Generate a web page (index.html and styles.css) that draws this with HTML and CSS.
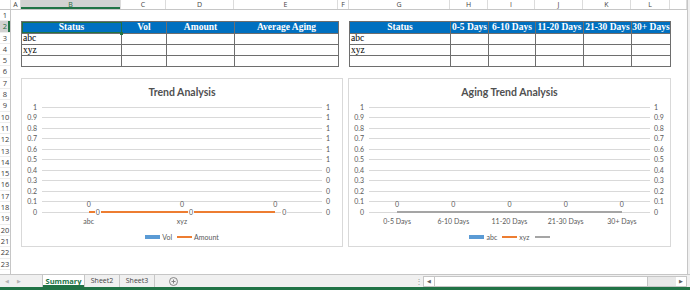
FILE: index.html
```html
<!DOCTYPE html>
<html lang="en">
<head>
    <meta charset="UTF-8">
    <meta name="viewport" content="width=device-width, initial-scale=1.0">
    <title>Summary</title>
    <link rel="stylesheet" href="styles.css">
</head>
<body>
<div class="window">
  <div class="workarea">
    <div class="sheet-area">
      <div class="col-heads">
        <div class="corner"></div>
        <div>A</div><div class="active">B</div><div>C</div><div>D</div><div>E</div><div>F</div>
        <div>G</div><div>H</div><div>I</div><div>J</div><div>K</div><div>L</div><div></div>
      </div>

      <div class="sheet">
        <div class="row-heads">
          <div class="rn">1</div><div class="rn active">2</div><div class="rn">3</div><div class="rn">4</div>
          <div class="rn">5</div><div class="rn">6</div><div class="rn">7</div><div class="rn">8</div>
          <div class="rn">9</div><div class="rn">10</div><div class="rn">11</div><div class="rn">12</div>
          <div class="rn">13</div><div class="rn">14</div><div class="rn">15</div><div class="rn">16</div>
          <div class="rn">17</div><div class="rn">18</div><div class="rn">19</div><div class="rn">20</div>
          <div class="rn">21</div><div class="rn">22</div><div class="rn">23</div>
        </div>

        <div class="cells">
          <table class="data-table table-left">
            <colgroup><col style="width:100px"><col style="width:45px"><col style="width:68px"><col style="width:104px"></colgroup>
            <tr><th class="selected">Status</th><th>Vol</th><th>Amount</th><th>Average Aging</th></tr>
            <tr><td>abc</td><td></td><td></td><td></td></tr>
            <tr><td>xyz</td><td></td><td></td><td></td></tr>
            <tr><td></td><td></td><td></td><td></td></tr>
          </table>

          <table class="data-table table-right">
            <colgroup><col style="width:101px"><col style="width:38px"><col style="width:47px"><col style="width:48px"><col style="width:48px"><col style="width:39px"></colgroup>
            <tr><th>Status</th><th>0-5 Days</th><th>6-10 Days</th><th>11-20 Days</th><th>21-30 Days</th><th>30+ Days</th></tr>
            <tr><td>abc</td><td></td><td></td><td></td><td></td><td></td></tr>
            <tr><td>xyz</td><td></td><td></td><td></td><td></td><td></td></tr>
            <tr><td></td><td></td><td></td><td></td><td></td><td></td></tr>
          </table>

          <!-- Trend Analysis chart -->
          <div class="chart chart-left">
            <div class="chart-title">Trend Analysis</div>
            <div class="plot">
              <div class="tick"><span class="lbl-l">1</span><span class="rule"></span><span class="lbl-r">1</span></div>
              <div class="tick"><span class="lbl-l">0.9</span><span class="rule"></span><span class="lbl-r">1</span></div>
              <div class="tick"><span class="lbl-l">0.8</span><span class="rule"></span><span class="lbl-r">1</span></div>
              <div class="tick"><span class="lbl-l">0.7</span><span class="rule"></span><span class="lbl-r">1</span></div>
              <div class="tick"><span class="lbl-l">0.6</span><span class="rule"></span><span class="lbl-r">1</span></div>
              <div class="tick"><span class="lbl-l">0.5</span><span class="rule"></span><span class="lbl-r">1</span></div>
              <div class="tick"><span class="lbl-l">0.4</span><span class="rule"></span><span class="lbl-r">0</span></div>
              <div class="tick"><span class="lbl-l">0.3</span><span class="rule"></span><span class="lbl-r">0</span></div>
              <div class="tick"><span class="lbl-l">0.2</span><span class="rule"></span><span class="lbl-r">0</span></div>
              <div class="tick"><span class="lbl-l">0.1</span><span class="rule"></span><span class="lbl-r">0</span></div>
              <div class="tick"><span class="lbl-l">0</span><span class="rule"></span><span class="lbl-r">0</span></div>
              <div class="series">
                <div class="series-line orange three"></div>
                <div class="val-labels three"><span>0</span><span>0</span><span>0</span></div>
                <div class="val-labels three on-line"><span><em>0</em></span><span><em>0</em></span><span><em>0</em></span></div>
              </div>
            </div>
            <div class="cats three"><span>abc</span><span>xyz</span><span></span></div>
            <div class="legend">
              <div class="key"><span class="swatch bar"></span>Vol</div>
              <div class="key"><span class="swatch orange"></span>Amount</div>
            </div>
          </div>

          <!-- Aging Trend Analysis chart -->
          <div class="chart chart-right">
            <div class="chart-title">Aging Trend Analysis</div>
            <div class="plot">
              <div class="tick"><span class="lbl-l">1</span><span class="rule"></span><span class="lbl-r">1</span></div>
              <div class="tick"><span class="lbl-l">0.9</span><span class="rule"></span><span class="lbl-r">0.9</span></div>
              <div class="tick"><span class="lbl-l">0.8</span><span class="rule"></span><span class="lbl-r">0.8</span></div>
              <div class="tick"><span class="lbl-l">0.7</span><span class="rule"></span><span class="lbl-r">0.7</span></div>
              <div class="tick"><span class="lbl-l">0.6</span><span class="rule"></span><span class="lbl-r">0.6</span></div>
              <div class="tick"><span class="lbl-l">0.5</span><span class="rule"></span><span class="lbl-r">0.5</span></div>
              <div class="tick"><span class="lbl-l">0.4</span><span class="rule"></span><span class="lbl-r">0.4</span></div>
              <div class="tick"><span class="lbl-l">0.3</span><span class="rule"></span><span class="lbl-r">0.3</span></div>
              <div class="tick"><span class="lbl-l">0.2</span><span class="rule"></span><span class="lbl-r">0.2</span></div>
              <div class="tick"><span class="lbl-l">0.1</span><span class="rule"></span><span class="lbl-r">0.1</span></div>
              <div class="tick"><span class="lbl-l">0</span><span class="rule"></span><span class="lbl-r">0</span></div>
              <div class="series">
                <div class="series-line gray five"></div>
                <div class="val-labels five"><span>0</span><span>0</span><span>0</span><span>0</span><span>0</span></div>
              </div>
            </div>
            <div class="cats five"><span>0-5 Days</span><span>6-10 Days</span><span>11-20 Days</span><span>21-30 Days</span><span>30+ Days</span></div>
            <div class="legend">
              <div class="key"><span class="swatch bar"></span>abc</div>
              <div class="key"><span class="swatch orange"></span>xyz</div>
              <div class="key"><span class="swatch gray"></span></div>
            </div>
          </div>
        </div>
      </div>
    </div>
    <div class="vscroll"></div>
  </div>

  <div class="tabbar">
    <div class="nav"><span>&#9664;</span><span>&#9654;</span></div>
    <div class="tab active">Summary</div>
    <div class="tab">Sheet2</div>
    <div class="tab">Sheet3</div>
    <div class="add-sheet">
      <svg width="9" height="9" viewBox="0 0 9 9"><circle cx="4.5" cy="4.5" r="4" fill="none" stroke="#7a7a7a" stroke-width="0.9"/><path d="M4.5 2.5v4M2.5 4.5h4" stroke="#7a7a7a" stroke-width="0.9"/></svg>
    </div>
    <div class="spacer"></div>
    <div class="splitter">&#8942;</div>
    <div class="hscroll">
      <span class="arrow">&#9664;</span>
      <span class="thumb"></span>
      <span class="track"></span>
      <span class="arrow">&#9654;</span>
    </div>
  </div>
  <div class="statusbar"></div>
</div>
</body>
</html>
```

FILE: styles.css
```css
body {
  margin: 0;
  width: 690px;
  height: 290px;
  overflow: hidden;
  background: #fff;
  font-family: "Open Sans", sans-serif;
}

.window {
  display: flex;
  flex-direction: column;
  height: 290px;
}

.workarea {
  display: flex;
  height: 274px;
}

.sheet-area {
  width: 687px;
  display: flex;
  flex-direction: column;
}

.vscroll {
  flex: 1;
  background: #f0f0f0;
  border-left: 1px solid #c6c6c6;
}

/* column letters */
.col-heads {
  display: grid;
  grid-template-columns: 11px 10px 100px 45px 68px 104px 11px 101px 38px 47px 48px 48px 39px 1fr;
  height: 10px;
  box-sizing: border-box;
  border-bottom: 1px solid #c6c6c6;
}

.col-heads div {
  border-right: 1px solid #dcdcdc;
  text-align: center;
  font-size: 7px;
  line-height: 9px;
  color: #444;
}

.col-heads .active {
  background: #d2d2d2;
  box-shadow: inset 0 -2px #217346;
  color: #1e6b41;
}

.sheet {
  display: flex;
  flex: 1;
  overflow: hidden;
}

/* row numbers */
.row-heads {
  width: 11px;
  flex-shrink: 0;
  box-sizing: border-box;
  border-right: 1px solid #c6c6c6;
}

.rn {
  height: 11.3px;
  box-sizing: border-box;
  border-bottom: 1px solid #ededed;
  font-size: 7.5px;
  line-height: 11px;
  text-align: center;
  color: #3c3c3c;
}

.rn.active {
  background: #d2d2d2;
  box-shadow: inset -2px 0 #217346;
  color: #1e6b41;
}

.cells {
  flex: 1;
  display: grid;
  grid-template-columns: 10px 100px 45px 68px 104px 11px 101px 38px 47px 48px 48px 39px 1fr;
  grid-template-rows: repeat(23, 11.3px);
}

/* tables */
.data-table {
  border-collapse: collapse;
  table-layout: fixed;
  width: 100%;
  height: 100%;
  font-family: "Liberation Serif", serif;
  font-size: 9.5px;
}

.data-table tr {
  height: 11.3px;
}

.table-left {
  grid-column: 2 / 6;
  grid-row: 2 / 6;
}

.table-right {
  grid-column: 7 / 13;
  grid-row: 2 / 6;
}

.data-table th,
.data-table td {
  border: 1px solid #6e6e6e;
  padding: 0 1px;
  line-height: 9px;
  white-space: nowrap;
  overflow: hidden;
}

.data-table th {
  background: #0070c0;
  color: #fff;
  font-weight: bold;
  text-align: center;
  padding: 0;
}

.data-table td {
  text-align: left;
  color: #000;
}

.data-table th.selected {
  position: relative;
  overflow: visible;
  outline: 1px solid #217346;
  outline-offset: -1px;
}

.data-table th.selected::after {
  content: "";
  position: absolute;
  right: -2px;
  bottom: -2px;
  width: 3px;
  height: 3px;
  background: #217346;
}

/* charts */
.chart {
  display: flex;
  flex-direction: column;
  padding-top: 7px;
  border: 1px solid #d9d9d9;
  background: #fff;
  font-family: Lato, sans-serif;
  color: #595959;
}

.chart-left {
  grid-column: 2 / 7;
  grid-row: 7 / 22;
  margin-right: 6px;
}

.chart-right {
  grid-column: 7 / 13;
  grid-row: 7 / 22;
  margin: 0 -1px;
}

.chart-title {
  font-size: 10.5px;
  font-weight: 700;
  line-height: 12px;
  text-align: center;
  margin-bottom: 4px;
  color: #505050;
}

.plot {
  position: relative;
}

.tick {
  display: grid;
  grid-template-columns: 20px 1fr 20px;
  align-items: center;
  height: 10.5px;
  font-size: 7px;
  line-height: 10.5px;
}

.tick .lbl-l {
  text-align: right;
  padding-right: 5px;
}

.tick .lbl-r {
  padding-left: 4px;
}

.tick .rule {
  height: 1px;
  background: #d9d9d9;
}

.series {
  position: absolute;
  left: 20px;
  right: 20px;
  bottom: 5px;
  height: 0;
}

.series-line {
  position: absolute;
  top: -1px;
  height: 2px;
}

.series-line.three { left: 16.667%; right: 16.667%; }
.series-line.five { left: 10%; right: 10%; }
.series-line.orange { background: #ed7d31; }
.series-line.gray { background: #a5a5a5; }

.val-labels {
  position: absolute;
  left: 0;
  right: 0;
  bottom: 4px;
  display: grid;
  text-align: center;
  font-size: 7px;
  line-height: 8px;
}

.three { grid-template-columns: repeat(3, 1fr); }
.five { grid-template-columns: repeat(5, 1fr); }

.val-labels.on-line {
  bottom: -4px;
}

.val-labels.on-line span {
  padding-left: 18px;
}

.val-labels.on-line em {
  font-style: normal;
  background: #fff;
  padding: 0 1px;
}

.cats {
  display: grid;
  margin: 0 20px;
  font-size: 7px;
  line-height: 8px;
  text-align: center;
}

.legend {
  display: flex;
  justify-content: center;
  align-items: center;
  gap: 5px;
  margin-top: 7.5px;
  font-size: 7px;
  line-height: 8px;
}

.key {
  display: flex;
  align-items: center;
  gap: 2px;
}

.swatch {
  width: 15px;
  height: 2px;
}

.swatch.bar { height: 4px; background: #5b9bd5; }
.swatch.orange { background: #ed7d31; }
.swatch.gray { background: #a5a5a5; }

/* sheet tabs */
.tabbar {
  display: flex;
  height: 13px;
  box-sizing: border-box;
  background: #f0f0f0;
  border-top: 1px solid #c6c6c6;
  font-size: 7px;
  color: #444;
}

.nav {
  width: 42px;
  display: flex;
  gap: 8px;
  padding-left: 5px;
  box-sizing: border-box;
  font-size: 5px;
  line-height: 12px;
  color: #b4b4b4;
}

.tab {
  width: 35px;
  text-align: center;
  line-height: 12px;
  border-right: 1px solid #c6c6c6;
  box-sizing: border-box;
}

.tab.active {
  width: 43px;
  background: #fff;
  color: #217346;
  font-weight: 700;
  font-size: 7.5px;
  border-left: 1px solid #c6c6c6;
  box-shadow: inset 0 -2px #217346;
}

.add-sheet {
  display: flex;
  align-items: center;
  margin-left: 14px;
}

.spacer {
  flex: 1;
}

.splitter {
  width: 8px;
  line-height: 12px;
  color: #9a9a9a;
  font-size: 8px;
}

.hscroll {
  display: flex;
  width: 264px;
  height: 11px;
  margin: 0 3px 0 0;
  align-self: center;
  box-sizing: border-box;
  border: 1px solid #c6c6c6;
  background: #e8e8e8;
}

.hscroll .arrow {
  width: 10px;
  background: #fff;
  font-size: 5px;
  line-height: 9px;
  text-align: center;
  color: #606060;
}

.hscroll .thumb {
  width: 212px;
  background: #fff;
  border-left: 1px solid #c6c6c6;
  border-right: 1px solid #c6c6c6;
}

.hscroll .track {
  flex: 1;
}

.statusbar {
  height: 3px;
  background: #217346;
}
```
